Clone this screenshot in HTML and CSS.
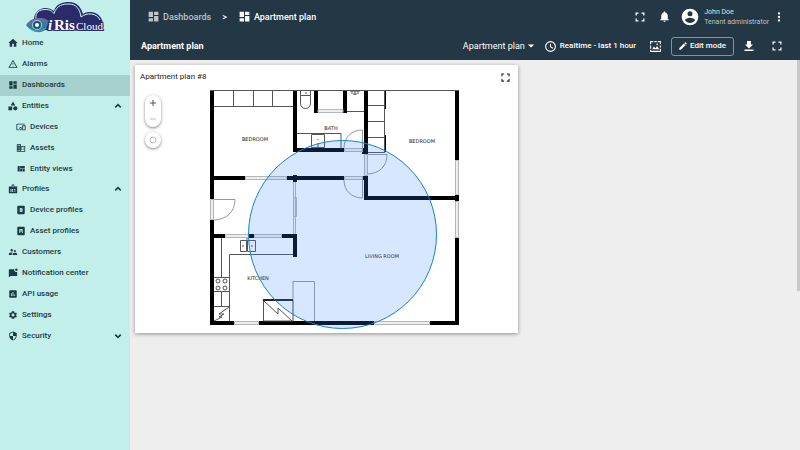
FILE: index.html
```html
<!DOCTYPE html>
<html lang="en">
<head>
<meta charset="utf-8">
<meta name="viewport" content="width=device-width, initial-scale=1">
<title>Apartment plan</title>
<link rel="stylesheet" href="styles.css">
</head>
<body>
<svg class="sprite" aria-hidden="true">
  <symbol id="dash" viewBox="0 0 24 24"><path d="M3 13h8V3H3v10zm0 8h8v-6H3v6zm10 0h8V11h-8v10zm0-18v6h8V3h-8z"/></symbol>
  <symbol id="full" viewBox="0 0 24 24"><path d="M3 3h6v2.500H5.500V9H3zM15 3h6v6h-2.500V5.500H15zM3 15h2.500v3.500H9V21H3zM18.500 15H21v6h-6v-2.500h3.500z"/></symbol>
  <symbol id="up" viewBox="0 0 24 24"><path d="M12 6 4 14l2.800 2.800L12 11.600l5.200 5.200L20 14z"/></symbol>
  <symbol id="down" viewBox="0 0 24 24"><path d="M12 18 4 10l2.800-2.800L12 12.400l5.200-5.200L20 10z"/></symbol>
</svg>
<div class="app">
  <aside class="sidebar">
    <a class="logo" href="#" aria-label="iRis Cloud">
      <svg viewBox="0 0 80 33">
        <path d="M12 30C5 23 7 9 19 8C23 8 25 9 28 11C30 4 36 2 43 2C51 2 55 7 57 14C63 10 73 12 76 20C78 24 78 28 76 31Z" fill="#292b6b"/>
        <path d="M10 19C9 12 14 9.500 19 9.500C24 9.500 26 11 28 13.500C31 5 37 4 43 4C50 4 54 9 55 17C61 12 71 13 74 20" fill="none" stroke="#d8f4f3" stroke-width="1"/>
        <path d="M0 25C5 17 15 16 23 21L20 29C14 35 5 32 0 25Z" fill="#357d9a"/>
        <path d="M3 25C7 19 15 17 21 21" fill="none" stroke="#7965a5" stroke-width="2"/>
        <path d="M4 28C9 33 15 31 20 28" fill="none" stroke="#3aaab2" stroke-width="1"/>
        <circle cx="11" cy="25" r="5" fill="#9bd6de"/><circle cx="11" cy="25" r="4" fill="#214d7b"/><circle cx="11" cy="25" r="2" fill="#fff"/>
        <text x="22" y="30" class="logo-iris"><tspan font-style="italic">i</tspan><tspan x="28">Ris</tspan></text>
        <text x="50" y="30" class="logo-cloud">Cloud</text>
      </svg>
    </a>
    <nav class="menu">
      <a href="#"><svg viewBox="0 0 24 24"><path d="M10 21v-7h4v7h6v-9h3L12 2 1 12h3v9z"/></svg><span>Home</span></a>
      <a href="#"><svg viewBox="0 0 24 24"><path d="M12 5.500 19.500 19h-15zM1 21h22L12 2z" fill-rule="evenodd"/><path d="M11 16h2v2h-2zM11 10h2v4h-2z"/></svg><span>Alarms</span></a>
      <a href="#" class="active"><svg><use href="#dash"/></svg><span>Dashboards</span></a>
      <a href="#"><svg viewBox="0 0 24 24"><path d="M12 1 6.500 11h11zM1 13h9v9H1z"/><circle cx="17.500" cy="17.500" r="5"/></svg><span>Entities</span><svg class="toggle"><use href="#up"/></svg></a>
      <a href="#" class="child"><svg viewBox="0 0 24 24"><path d="M3 6h18V4H3c-1.100 0-2 .9-2 2v12c0 1.100.9 2 2 2h4v-2H3V6zm10 6H9v2c-.6.500-1 1.300-1 2s.4 1.500 1 2v2h4v-2c.6-.500 1-1.200 1-2s-.4-1.500-1-2v-2zm-2 5.500a1.500 1.500 0 1 1 0-3 1.500 1.500 0 0 1 0 3zM22 8h-6c-.5 0-1 .5-1 1v10c0 .5.5 1 1 1h6c.5 0 1-.5 1-1V9c0-.5-.5-1-1-1zm-1 10h-4v-8h4v8z"/></svg><span>Devices</span></a>
      <a href="#" class="child"><svg viewBox="0 0 24 24"><path d="M12 7V3H2v18h20V7H12zM6 19H4v-2h2v2zm0-4H4v-2h2v2zm0-4H4V9h2v2zm0-4H4V5h2v2zm4 12H8v-2h2v2zm0-4H8v-2h2v2zm0-4H8V9h2v2zm0-4H8V5h2v2zm10 12h-8v-2h2v-2h-2v-2h2v-2h-2V9h8v10zm-2-8h-2v2h2v-2zm0 4h-2v2h2v-2z"/></svg><span>Assets</span></a>
      <a href="#" class="child"><svg viewBox="0 0 24 24"><path d="M10 18h5v-6h-5v6zm-6 0h5V5H4v13zm12 0h5v-6h-5v6zM10 5v6h11V5H10z"/></svg><span>Entity views</span></a>
      <a href="#"><svg viewBox="0 0 24 24"><path fill-rule="evenodd" d="M9 6V1h6v5h7v16H2V6zM11 3v5h2V3zM6 12v7h6v-7zm8 0v2h4v-2zm0 4v2h4v-2z"/><circle cx="9" cy="14" r="1.500"/><path d="M7 18h4v-2H7z"/></svg><span>Profiles</span><svg class="toggle"><use href="#up"/></svg></a>
      <a href="#" class="child"><svg viewBox="0 0 24 24"><path fill-rule="evenodd" d="M5 2h14q2 0 2 2v16q0 2-2 2H5q-2 0-2-2V4q0-2 2-2zm4 5v10h4q3 0 3-3 0-1.500-1-2 1-.5 1-2 0-3-3-3zm2 2h2v2h-2zm0 4h2v2h-2z"/></svg><span>Device profiles</span></a>
      <a href="#" class="child"><svg viewBox="0 0 24 24"><path fill-rule="evenodd" d="M5 2h14q2 0 2 2v16q0 2-2 2H5q-2 0-2-2V4q0-2 2-2zm3 5v10h2v-4h4v4h2V7zm2 2h4v2h-4z"/></svg><span>Asset profiles</span></a>
      <a href="#"><svg viewBox="0 0 24 24"><path d="M16.500 12a2.500 2.500 0 1 0 0-5 2.500 2.500 0 0 0 0 5zM9 11a3 3 0 1 0 0-6 3 3 0 0 0 0 6zm7.500 3c-1.800 0-5.500.9-5.500 2.800V19h11v-2.200c0-1.900-3.700-2.800-5.500-2.800zM9 13c-2.300 0-7 1.200-7 3.500V19h7v-2.200c0-.9.3-2.300 2.400-3.500C10.500 13.100 9.700 13 9 13z"/></svg><span>Customers</span></a>
      <a href="#"><svg viewBox="0 0 24 24"><path d="M3 3h12a5 5 0 0 0 7 6v10H6l-4 4V4q0-1 1-1z"/><circle cx="20" cy="4" r="3"/></svg><span>Notification center</span></a>
      <a href="#"><svg viewBox="0 0 24 24"><path d="M19 3H5c-1.100 0-2 .9-2 2v14c0 1.100.9 2 2 2h14c1.100 0 2-.9 2-2V5c0-1.100-.9-2-2-2zM9 17H7v-7h2v7zm4 0h-2V7h2v10zm4 0h-2v-4h2v4z"/></svg><span>API usage</span></a>
      <a href="#"><svg viewBox="0 0 24 24"><path d="M19.400 13a7 7 0 0 0 0-2l2.100-1.600-2-3.500-2.500 1a8 8 0 0 0-1.700-1L15 3H9l-.4 2.900a8 8 0 0 0-1.600 1l-2.500-1-2 3.500L4.600 11a7 7 0 0 0 0 2l-2.100 1.600 2 3.500 2.500-1a8 8 0 0 0 1.600 1L9 21h6l.3-2.900a8 8 0 0 0 1.700-1l2.500 1 2-3.500zM12 15.500a3.500 3.500 0 1 1 0-7 3.500 3.500 0 0 1 0 7z"/></svg><span>Settings</span></a>
      <a href="#"><svg viewBox="0 0 24 24"><path d="M12 1 3 5v6c0 5.550 3.840 10.740 9 12 5.160-1.260 9-6.450 9-12V5l-9-4zm0 10.990h7c-.53 4.120-3.280 7.790-7 8.940V12H5V6.300l7-3.110v8.800z"/></svg><span>Security</span><svg class="toggle"><use href="#down"/></svg></a>
    </nav>
  </aside>
  <div class="page">
    <header>
      <div class="bar">
        <nav class="crumbs" aria-label="Breadcrumb">
          <a href="#" class="parent"><svg><use href="#dash"/></svg>Dashboards</a>
          <span class="sep">&gt;</span>
          <a href="#"><svg><use href="#dash"/></svg>Apartment plan</a>
        </nav>
        <button class="icon" aria-label="Fullscreen"><svg><use href="#full"/></svg></button>
        <button class="icon bell" aria-label="Notifications"><svg viewBox="0 0 24 24"><path d="M12 22c1.100 0 2-.9 2-2h-4c0 1.100.9 2 2 2zm6-6v-5c0-3.070-1.640-5.640-4.500-6.320V4a1.500 1.500 0 0 0-3 0v.68C7.630 5.360 6 7.920 6 11v5l-2 2v1h16v-1l-2-2z"/></svg></button>
        <div class="user">
          <svg viewBox="0 0 24 24"><path d="M12 2a10 10 0 1 0 0 20 10 10 0 0 0 0-20zm0 3a3 3 0 1 1 0 6 3 3 0 0 1 0-6zm0 14.200c-2.500 0-4.700-1.300-6-3.200 0-2 4-3.100 6-3.100s6 1.100 6 3.100c-1.300 1.900-3.500 3.200-6 3.200z"/></svg>
          <div><div>John Doe</div><div class="role">Tenant administrator</div></div>
        </div>
        <button class="icon" aria-label="More"><svg viewBox="0 0 24 24"><circle cx="12" cy="5" r="2.300"/><circle cx="12" cy="12" r="2.300"/><circle cx="12" cy="19" r="2.300"/></svg></button>
      </div>
      <div class="bar tools">
        <h1>Apartment plan</h1>
        <button class="state">Apartment plan<svg viewBox="0 0 10 10"><path d="M1 3h8L5 7z"/></svg></button>
        <button class="time"><svg viewBox="0 0 24 24"><path d="M12 2a10 10 0 1 0 0 20 10 10 0 0 0 0-20zm0 18a8 8 0 1 1 0-16 8 8 0 0 1 0 16zm1-13h-2v6l5 3 1-1.500-4-2.500z"/></svg>Realtime - last 1 hour</button>
        <button class="icon image" aria-label="Dashboard image"><svg viewBox="0 0 24 24"><path d="M2 2h6v2H4v4H2zM10 2h4v2h-4zM16 2h6v6h-2V4h-4zM2 10h2v6H2zM20 10h2v4h-2zM20 16h2v6H2v-4h2v2h16zM6 17l3-5 3 3 3-4 4 6z"/><circle cx="15" cy="8" r="1.500"/></svg></button>
        <button class="edit"><svg viewBox="0 0 24 24"><path d="M3 17.250V21h3.750L17.810 9.940l-3.750-3.750L3 17.250zM20.710 7.040a1 1 0 0 0 0-1.410l-2.340-2.340a1 1 0 0 0-1.410 0l-1.830 1.830 3.750 3.750 1.830-1.830z"/></svg>Edit mode</button>
        <button class="icon download" aria-label="Export"><svg viewBox="0 0 24 24"><path d="M20 9h-4V2H8v7H4l8 8zM3 19v3h18v-3z"/></svg></button>
        <button class="icon" aria-label="Expand"><svg><use href="#full"/></svg></button>
      </div>
    </header>
    <main>
      <section class="widget">
        <div class="title"><h2>Apartment plan #8</h2><button class="icon" aria-label="Expand widget"><svg><use href="#full"/></svg></button></div>
        <div class="map">
          <svg class="plan" viewBox="135 89 383 244" role="img" aria-label="Floor plan">
            <g class="walls">
              <path d="M210 90h4v109h-4zM210 220h4v105h-4zM214 321h20v4h-20zM259 321h115v4H259zM430 321h25v4h-25zM455 238h4v87h-4zM455 90h4v70h-4zM455 195h4v6h-4z"/>
              <path d="M293 90h4v62h-4zM297 148h47v4h-47zM362 148h6v6h-6zM364 90h4v64h-4zM214 176h31v4h-31zM287 176h57v4h-57zM293 175h4v7h-4zM362 176h6v4h-6zM364 176h4v20h-4zM364 196h91v4h-91z"/>
              <path d="M314 90h4v23h-4zM343 90h4v23h-4zM214 234h11v4h-11zM249 234h5v4h-5zM282 234h15v4h-15zM293 238h4v19h-4z"/>
              <path d="M214 106h20v1h-20zM252 106h21v1h-21zM384 90h2v19h-2zM384 135h2v17h-2z"/>
            </g>
            <g class="windows">
              <path d="M210.500 199.500h3v20h-3zM234.500 321.500h24v3h-24zM374.500 321.500h55v3h-55zM455.500 160.500h3v34h-3zM455.500 201.500h3v36h-3zM245.500 176.500h41v3h-41zM225.500 234.500h23v3h-23zM254.500 234.500h27v3h-27zM318 109.500h25v3h-25zM364.500 154.500h3v21h-3zM344.500 148.500h18v3h-18zM344.500 176.500h18v3h-18z"/>
              <path d="M293.500 182v52M295.500 182v52M293.500 197.500h3v19h-3z"/>
            </g>
            <g class="thin">
              <path d="M210 90.500h249M214 106.500h79M233.500 90v16M253.500 90v16M272.500 90v16M368 105.500h17M368 121.500h17M368 137.500h17M368 152.500h17M384.500 90v62M347 111.500h17M297 133.500h44v15"/>
              <path d="M311.500 134.500h13v13h-13zM318 139v1M318 143v5M300.500 90.500h10v5h-10zM300.500 95.500v8a5 5 0 0 0 10 0v-8M305 93h2M350 91h10M352 90v4M355 90v5M358 90v4M353 94h4"/>
              <path d="M221.500 238v39M221.500 291v15M293 254.500h-63.500V321M214 277.500h15.500M214 291.500h15.500M214 306.500h15.500M240.500 240.500h6v11h-6zM247.500 240.500h8v11h-8zM247 238v6M242 246h2M251 246h2"/>
              <circle cx="218" cy="281" r="2"/><circle cx="225" cy="281" r="2"/><circle cx="218" cy="288" r="2"/><circle cx="225" cy="288" r="2"/>
              <path d="m229 307-10 7h5l-5 3h3l-8 4M263.500 300.500h29.500V321h-29.500zM264 301l14 13v-6l14 13"/>
            </g>
            <path class="fixture" d="M293 281.500h21.500V321M293 281v40M214 199.500h21c0 12-8 20-21 20.500M344 148c0-11 8-18 18.500-18v22M344 180c0 11 8 18 18.500 18v-18M368 154.500h19c0 12-8 19-19 19.500"/>
            <path class="bold" d="M263 300h30"/>
            <g class="rooms">
              <text x="255" y="141">BEDROOM</text><text x="331" y="130">BATH</text><text x="422" y="143">BEDROOM</text><text x="382" y="258">LIVING ROOM</text><text x="258" y="280">KITCHEN</text>
            </g>
            <circle class="zone" cx="342.500" cy="234.500" r="94"/>
          </svg>
          <div class="controls">
            <div class="zoom"><button aria-label="Zoom in"><svg viewBox="0 0 8 8"><path d="M1 4h6M4 1v6"/></svg></button><button aria-label="Zoom out" disabled><svg viewBox="0 0 8 8"><path d="M1 4h6"/></svg></button></div>
            <button class="locate" aria-label="Fit to plan"><svg viewBox="0 0 8 8"><circle cx="4" cy="4" r="3"/></svg></button>
          </div>
        </div>
      </section>
    </main>
  </div>
</div>
</body>
</html>
```

FILE: styles.css
```css
* { box-sizing: border-box; }
body { margin: 0; font: 8px/10px Roboto, sans-serif; color: #222; background: #eee; }
a { color: inherit; text-decoration: none; }
button { padding: 0; border: 0; background: none; color: inherit; font: inherit; display: flex; align-items: center; }
svg { display: block; flex: none; fill: currentColor; }
h1, h2 { margin: 0; }
.sprite { position: absolute; width: 0; height: 0; }

.app { display: grid; grid-template-columns: 130px 1fr; min-height: 100vh; }
.sidebar { background: #c3efea; color: #1b3b43; }
.logo { display: block; padding: 0 26px; height: 33px; }
.logo svg { width: 80px; height: 33px; }
.logo text { font-family: "Liberation Serif", serif; fill: #fff; stroke: #292b6b; stroke-width: 2px; paint-order: stroke; }
.logo .logo-iris { font-size: 15px; font-weight: bold; }
.logo .logo-cloud { font-size: 11px; }

.menu { display: grid; grid-auto-rows: 1fr; height: 313px; font-size: 8px; font-weight: 500; }
.menu a { display: flex; align-items: center; gap: 4px; padding: 0 7px 0 8px; }
.menu a.child { padding-left: 16px; }
.menu a.active { background: #a6d1ce; }
.menu svg { width: 10px; height: 10px; }
.menu .toggle { margin-left: auto; }

.page { display: flex; flex-direction: column; min-width: 0; }
header { background: #233744; color: #fff; padding-bottom: 1px; }
.bar { display: flex; align-items: center; height: 33px; padding: 0 15px 0 17px; }
.crumbs { display: flex; align-items: center; gap: 11px; margin-right: auto; font-size: 9px; font-weight: 500; }
.crumbs a { display: flex; align-items: center; gap: 3px; }
.crumbs .parent { color: #bcc4c9; }
.crumbs svg { width: 13px; height: 13px; }
.icon svg { width: 12px; height: 12px; }
.bell { margin: 0 9px 0 12px; }
.bell svg { width: 13px; height: 13px; }
.user { display: flex; align-items: center; gap: 4px; margin-right: 4px; font-size: 7px; color: #dfe4e7; }
.user svg { width: 20px; height: 20px; color: #fff; }
.role { color: #bcc4c9; }
.tools { height: 26px; padding: 0 17px 0 11px; }
.tools h1 { margin-right: auto; font-size: 9px; font-weight: 700; }
.state { font-size: 9px; }
.state svg { width: 8px; height: 8px; margin-left: 2px; }
.time { gap: 3px; margin: 0 13px 0 9px; font-weight: 500; }
.time svg { width: 13px; height: 13px; }
.image svg { width: 13px; height: 13px; }
.edit { gap: 2px; height: 19px; margin: 0 9px; padding: 0 7px 0 6px; border: 1px solid #8195a0; border-radius: 3px; font-size: 8px; font-weight: 500; }
.edit svg { width: 10px; height: 10px; }
.download { margin-right: 16px; }

main { flex: 1; display: grid; grid-template-columns: 383fr 279fr; align-items: start; padding: 5px 3px 5px 5px; background: linear-gradient(#c8c8c8, #c8c8c8) right top / 3px 231px no-repeat, #eee; }
.widget { background: #fff; box-shadow: 0 1px 4px rgba(0, 0, 0, .4); }
.title { display: flex; align-items: center; justify-content: space-between; height: 24px; padding: 0 7px 0 5px; }
.title h2 { font-size: 8px; font-weight: 400; }
.title .icon svg { width: 11px; height: 11px; }
.map { position: relative; }
.plan { width: 100%; height: auto; }
.walls { fill: #000; }
.windows { fill: #eee; stroke: #b5b5b5; stroke-width: 1; }
.thin { fill: none; stroke: #555; stroke-width: 1; }
.fixture { fill: none; stroke: #999; stroke-width: 1; }
.bold { stroke: #222; stroke-width: 2; }
.rooms { font: 5px "DejaVu Sans", sans-serif; text-anchor: middle; fill: #222; }
.zone { fill: #3388ff; fill-opacity: .2; stroke: #1483cf; stroke-width: 1; }
.controls { position: absolute; left: 10px; top: 6px; display: grid; gap: 5px; color: #555; }
.controls .zoom, .locate { border-radius: 8px; background: #fff; box-shadow: 0 1px 3px rgba(0, 0, 0, .5); }
.controls button { width: 16px; height: 16px; justify-content: center; }
.controls svg { width: 8px; height: 8px; fill: none; stroke: currentColor; stroke-width: 1; }
.controls button:disabled, .controls .locate { color: #bbb; }
```
